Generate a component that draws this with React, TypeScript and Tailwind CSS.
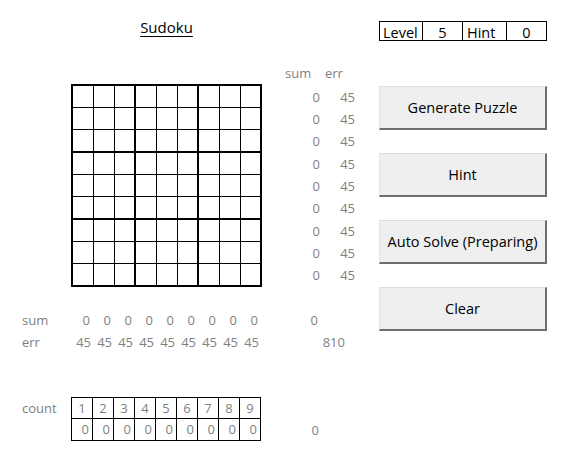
import React from "react";

const G = "text-[#7f7f7f]";
const rows = [0, 1, 2, 3, 4, 5, 6, 7, 8];

function Cell({ r, c }: { r: number; c: number }) {
  const right = c % 3 === 2 ? "border-r-2" : "border-r";
  const bottom = r % 3 === 2 ? "border-b-2 h-[23px]" : "border-b h-[22px]";
  return <div className={`w-[21px] border-black ${right} ${bottom}`} />;
}

function Btn({ label }: { label: string }) {
  return (
    <div className="h-[44px] w-[168px] bg-[#efefef] border-t border-l border-t-[#dcdcdc] border-l-[#e4e4e4] border-r-2 border-b-2 border-r-[#6e6e6e] border-b-[#6e6e6e] flex items-center justify-center text-[14.5px] text-black">
      {label}
    </div>
  );
}

export default function App() {
  return (
    <div
      className="w-[568px] h-[459px] bg-white flex overflow-hidden"
      style={{ fontFamily: '"Open Sans", "Noto Sans", sans-serif' }}
    >
      {/* left sheet */}
      <div className="w-[379px] flex flex-col">
        <div className="h-[62px] pt-[17px]">
          <div className="ml-[71px] w-[191px] text-center text-[15px] leading-[20px] text-black">
            <span className="underline underline-offset-[3px] decoration-1">Sudoku</span>
          </div>
        </div>
        {/* header row */}
        <div className={`h-[22px] flex text-[13px] leading-[22px] ${G}`}>
          <div className="w-[262px]" />
          <div className="w-[60px] pl-[23px]">sum</div>
          <div className="w-[35px] pl-[3px]">err</div>
        </div>
        {/* grid row */}
        <div className="flex">
          <div className="w-[71px]" />
          <div className="grid grid-cols-[repeat(9,21px)] border-l-2 border-t-2 border-black">
            {rows.map((r) => rows.map((c) => <Cell key={`${r}-${c}`} r={r} c={c} />))}
          </div>
          <div className={`pt-[2px] flex flex-col text-[13px] ${G}`}>
            {rows.map((r) => (
              <div
                key={r}
                className={`flex ${r % 3 === 2 ? "h-[23px] leading-[23px]" : "h-[22px] leading-[22px]"}`}
              >
                <div className="w-[60px] text-right pr-[2px]">0</div>
                <div className="w-[35px] text-right pr-[2px]">45</div>
              </div>
            ))}
          </div>
        </div>
        {/* sum row */}
        <div className={`mt-[22px] h-[22px] flex text-[13px] leading-[22px] ${G}`}>
          <div className="w-[71px] pl-[22px]">sum</div>
          {rows.map((c) => (
            <div key={c} className="w-[21px] text-right pr-[2px]">0</div>
          ))}
          <div className="w-[60px] text-right pr-[2px]">0</div>
        </div>
        {/* err row */}
        <div className={`h-[22px] flex text-[13px] leading-[22px] ${G}`}>
          <div className="w-[71px] pl-[22px]">err</div>
          {rows.map((c) => (
            <div key={c} className="w-[21px] text-right pr-[1px]">45</div>
          ))}
          <div className="w-[60px]" />
          <div className="w-[35px] text-right pr-[10px]">810</div>
        </div>
        {/* count table */}
        <div className={`mt-[44px] flex text-[13px] ${G}`}>
          <div className="w-[71px] pl-[22px] h-[22px] leading-[22px]">count</div>
          <div className="grid grid-cols-[repeat(9,21px)] border-l border-t border-black">
            {rows.map((c) => (
              <div key={`a${c}`} className="h-[21px] border-r border-b border-black text-center leading-[21px]">
                {c + 1}
              </div>
            ))}
            {rows.map((c) => (
              <div key={`b${c}`} className="h-[22px] border-r border-b border-black text-right pr-[3px] leading-[21px]">
                0
              </div>
            ))}
          </div>
          <div className="w-[60px] flex items-end justify-end pr-[2px] leading-[21px]">0</div>
        </div>
      </div>
      {/* right side */}
      <div className="w-[168px] flex flex-col pt-[21px]">
        <div className="h-[20px] w-[168px] flex border border-black text-[14.5px] text-black">
          <div className="flex-1 flex items-end pl-[3px] leading-[14px]">Level</div>
          <div className="flex-1 flex items-end justify-center border-l border-black leading-[14px]">5</div>
          <div className="flex-1 flex items-end pl-[4px] border-l border-black leading-[14px]">Hint</div>
          <div className="flex-1 flex items-end justify-center border-l border-black leading-[14px]">0</div>
        </div>
        <div className="mt-[45px] flex flex-col gap-[23px]">
          <Btn label="Generate Puzzle" />
          <Btn label="Hint" />
          <Btn label="Auto Solve (Preparing)" />
          <Btn label="Clear" />
        </div>
      </div>
    </div>
  );
}
